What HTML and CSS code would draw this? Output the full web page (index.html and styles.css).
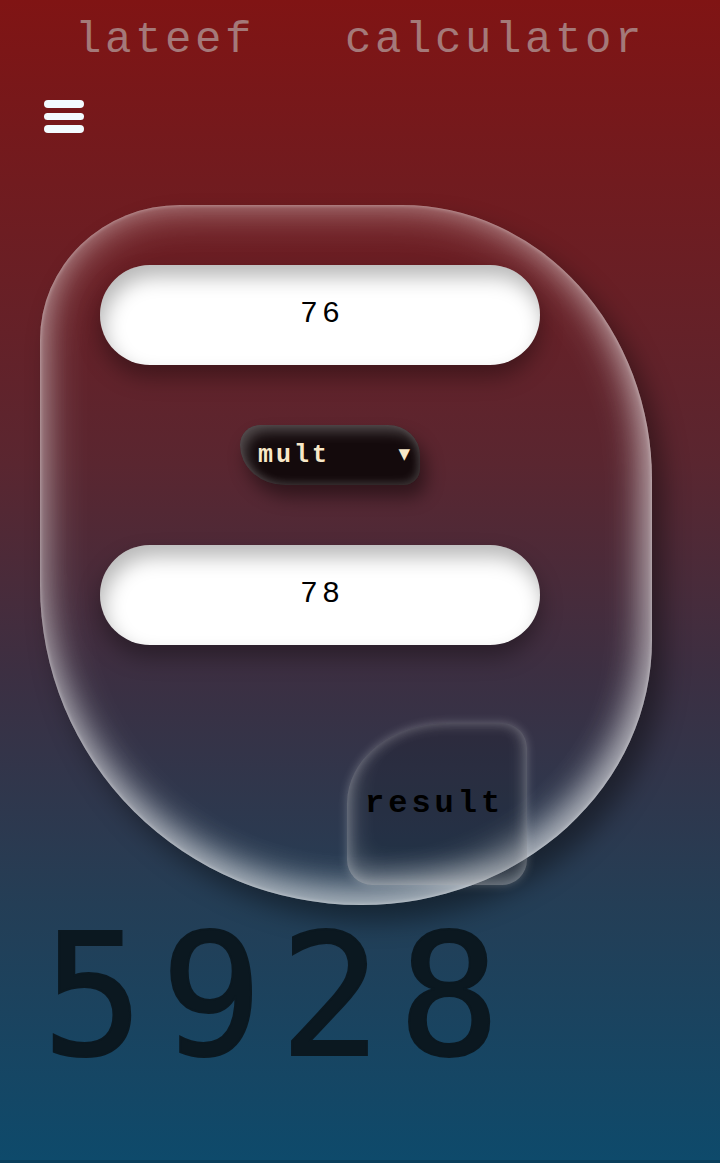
FILE: index.html
```html
<!DOCTYPE html>
<html lang="en">
<head>
<meta charset="utf-8">
<title>lateef calculator</title>
<link rel="stylesheet" href="styles.css">
</head>
<body>
<div class="page">
  <h1 class="title">lateef calculator</h1>
  <button class="menu" aria-label="menu">
    <span class="bar"></span>
    <span class="bar"></span>
    <span class="bar"></span>
  </button>
  <main class="card">
    <div class="field">76</div>
    <div class="select">
      <span class="select-label">mult</span>
      <span class="select-arrow">&#9660;</span>
    </div>
    <div class="field">78</div>
    <button class="result-btn">result</button>
  </main>
  <div class="output">5928</div>
</div>
</body>
</html>
```

FILE: styles.css
```css
html {
  background: #0b3f5c;
}
body {
  margin: 0;
}
.page {
  height: 1160px;
  background: linear-gradient(to bottom, #801414 0%, #5a2630 40%, #3c2f42 58%, #243e56 78%, #0e4a6b 100%);
  display: flex;
  flex-direction: column;
  align-items: flex-start;
  overflow: hidden;
}
.title {
  align-self: stretch;
  margin: 0;
  padding-top: 15px;
  text-align: center;
  font-family: "Liberation Mono", monospace;
  font-weight: normal;
  font-size: 44px;
  line-height: 50px;
  letter-spacing: 3.6px;
  word-spacing: 60px;
  color: #a47979;
}
.menu {
  margin: 35px 0 0 44px;
  padding: 0;
  border: 0;
  background: none;
  width: 40px;
  display: flex;
  flex-direction: column;
  gap: 5px;
}
.bar {
  display: block;
  width: 40px;
  height: 7.5px;
  border-radius: 4px;
  background: #f2fbff;
}
.card {
  margin: 72px 0 0 40px;
  width: 612px;
  height: 700px;
  box-sizing: border-box;
  padding: 60px 0 0 60px;
  border-radius: 140px 250px 290px 320px / 135px 275px 265px 320px;
  box-shadow:
    inset 0 0 45px rgba(255, 255, 255, 0.55),
    inset -6px -18px 32px rgba(255, 255, 255, 0.45),
    inset 0 0 4px rgba(255, 255, 255, 0.4),
    12px 16px 26px rgba(0, 0, 0, 0.4);
  display: flex;
  flex-direction: column;
  align-items: flex-start;
}
.field {
  width: 440px;
  height: 100px;
  border-radius: 50px;
  background: #ffffff;
  box-shadow:
    inset 4px 12px 20px rgba(0, 0, 0, 0.28),
    0 12px 22px rgba(0, 0, 0, 0.35);
  display: flex;
  align-items: center;
  justify-content: center;
  font-family: "Liberation Mono", monospace;
  font-size: 30px;
  letter-spacing: 4px;
  color: #000;
  padding: 0 0 2px 4px;
  box-sizing: border-box;
}
.select {
  margin: 60px 0 60px 140px;
  width: 180px;
  height: 60px;
  box-sizing: border-box;
  padding: 2px 10px 0 18px;
  border-radius: 20px 32px 16px 45px / 20px 30px 16px 40px;
  background: #140a0c;
  box-shadow:
    inset 5px 6px 14px rgba(255, 255, 255, 0.28),
    inset -3px -3px 8px rgba(255, 255, 255, 0.12),
    6px 12px 18px rgba(0, 0, 0, 0.45);
  display: flex;
  align-items: center;
  justify-content: space-between;
  color: #f8e8c8;
}
.select-label {
  font-family: "Liberation Mono", monospace;
  font-weight: bold;
  font-size: 25px;
  letter-spacing: 3px;
}
.select-arrow {
  font-family: "DejaVu Sans", sans-serif;
  font-size: 15px;
  margin-top: -4px;
}
.result-btn {
  margin: 78px 0 0 247px;
  width: 180px;
  height: 162px;
  padding: 0 0 0 18px;
  border: 0;
  border-radius: 100px 25px 25px 25px / 80px 25px 25px 25px;
  background: rgba(10, 15, 25, 0.2);
  box-shadow:
    inset 0 0 14px rgba(255, 255, 255, 0.3),
    inset 4px -16px 24px rgba(255, 255, 255, 0.25),
    0 0 10px rgba(255, 255, 255, 0.25);
  font-family: "Liberation Mono", monospace;
  font-weight: bold;
  font-size: 32px;
  letter-spacing: 4px;
  color: #000;
  display: flex;
  align-items: center;
  justify-content: flex-start;
}
.output {
  margin: 7px 0 0 42px;
  font-family: "DejaVu Sans Mono", monospace;
  font-size: 169px;
  line-height: 169px;
  letter-spacing: 17px;
  color: #0b1820;
  -webkit-text-stroke: 2px #0b1820;
}
```
